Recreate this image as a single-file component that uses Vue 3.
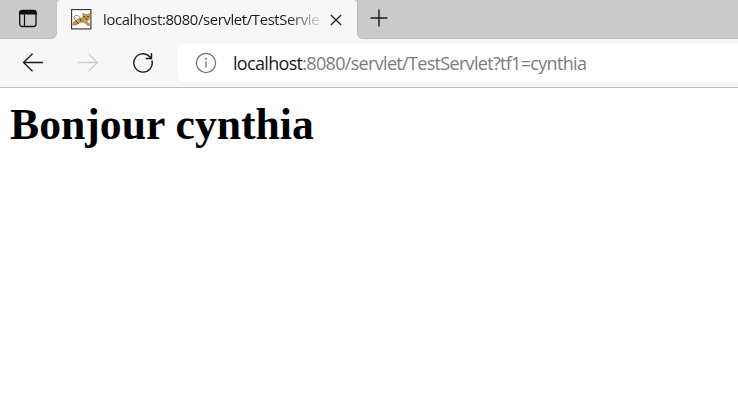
<script setup>
const pageTitle = 'localhost:8080/servlet/TestServlet'
const host = 'localhost'
const path = ':8080/servlet/TestServlet?tf1=cynthia'
const heading = 'Bonjour cynthia'
</script>

<template>
  <div class="browser">
    <div class="tabs">
      <div class="side side-left">
        <svg class="panel-icon" width="20" height="20" viewBox="0 0 20 20">
          <rect x="1.7" y="1.5" width="16.3" height="16" rx="2.5" fill="none" stroke="#111" stroke-width="1.3" />
          <path d="M1 5.500V4Q1 1 4 1H16Q18.7 1 18.7 4V5.500Z" fill="#111" />
          <path d="M6.5 5.500V17.5" stroke="#111" stroke-width="1.2" />
        </svg>
      </div>
      <div class="tab">
        <svg class="favicon" width="21" height="21" viewBox="0 0 21 21">
          <rect x=".6" y=".6" width="19.3" height="19.3" fill="#fff" stroke="#302e2c" stroke-width="1.1" />
          <path d="M5.5 12.5C2 10 2.5 6 6 6.5S8.500 8.500 9 9" fill="none" stroke="#77726a" stroke-width=".8" />
          <path d="M1.500 14L7 10L12 8.500L12 4.200L14 5.500H17L19.500 4V8.500L17.500 11L15.500 12L19.500 16L17 16.500L12.500 13L9 13.500L5 16H1.500L3.500 13.500Z" fill="#c99c4d" stroke="#755a30" stroke-width=".5" />
          <path d="M12.500 7.700H14.300M16.300 7.700H18M14.500 10H16.500" stroke="#3d301f" stroke-width="1" />
          <path d="M5 12L7.500 15M9 9.700L10 12" stroke="#443322" stroke-width="1" />
        </svg>
        <span class="tab-title">{{ pageTitle }}</span>
        <svg class="close" width="12" height="12" viewBox="0 0 12 12">
          <path d="M1 1L11 11M11 1L1 11" stroke="#222" stroke-width="1.3" />
        </svg>
      </div>
      <div class="side side-right">
        <svg class="plus" width="18" height="18" viewBox="0 0 18 18">
          <path d="M9 .5V17.500M.5 9H17.500" stroke="#1b1b1b" stroke-width="1.4" />
        </svg>
      </div>
    </div>
    <div class="toolbar">
      <svg class="nav" width="22" height="20" viewBox="0 0 22 20">
        <path d="M21 9.500H1.500M10.500 .7L1.500 9.500L10.500 18.300" fill="none" stroke="#171717" stroke-width="1.3" />
      </svg>
      <svg class="nav forward" width="22" height="20" viewBox="0 0 22 20">
        <path d="M1 9.500H20.500M11.500 .7L20.500 9.500L11.500 18.300" fill="none" stroke="#d0d0d0" stroke-width="1.3" />
      </svg>
      <svg class="nav reload" width="22" height="22" viewBox="0 0 22 22">
        <path d="M19.900 8.500A9.200 9.200 0 1 1 17.600 4.500L19.500 6.500M19.500 1V6.500H13.700" fill="none" stroke="#171717" stroke-width="1.4" />
      </svg>
      <div class="address">
        <svg class="info" width="22" height="22" viewBox="0 0 22 22">
          <circle cx="11" cy="11" r="9.600" fill="none" stroke="#707070" stroke-width="1.200" />
          <path d="M11 9.500V15.500" stroke="#707070" stroke-width="1.300" />
          <circle cx="11" cy="6.700" r="1" fill="#707070" />
        </svg>
        <span class="url"><span class="host">{{ host }}</span>{{ path }}</span>
      </div>
    </div>
    <main class="page">
      <h1>{{ heading }}</h1>
    </main>
  </div>
</template>

<style>
body {
  margin: 0;
  background: #fff;
}
</style>

<style scoped>
.browser {
  width: 738px;
  height: 405px;
  overflow: hidden;
  font-family: "Open Sans", "Noto Sans", sans-serif;
}
svg {
  display: block;
  flex: none;
}
.tabs {
  display: flex;
  height: 39px;
  background: linear-gradient(#cbcbcb 50%, #f7f7f7 50%);
}
.side {
  box-sizing: border-box;
  background: #cbcbcb;
  border-bottom: 1px solid #bcbcbc;
}
.side-left {
  width: 57px;
  padding: 9px 0 0 18px;
  border-right: 1px solid #c2c2c2;
  border-bottom-right-radius: 6px;
}
.side-right {
  flex: 1;
  padding: 9px 0 0 12px;
  border-left: 1px solid #bababa;
  border-bottom-left-radius: 6px;
}
.tab {
  box-sizing: border-box;
  display: flex;
  align-items: center;
  width: 300px;
  padding-left: 14px;
  background: #f7f7f7;
  border-radius: 4px 4px 0 0;
}
.tab-title {
  width: 216px;
  margin-left: 11px;
  padding-bottom: 2px;
  overflow: hidden;
  white-space: nowrap;
  font-size: 14.8px;
  line-height: 22px;
  letter-spacing: -0.34px;
  color: #1b1b1b;
  mask-image: linear-gradient(to right, #000 184px, transparent 222px);
}
.close {
  margin-left: 11px;
}
.toolbar {
  box-sizing: border-box;
  display: flex;
  align-items: center;
  height: 49px;
  padding-left: 22px;
  background: #f7f7f7;
  border-bottom: 1px solid #bdbdbd;
}
.forward {
  margin-left: 33px;
}
.reload {
  margin-left: 33px;
}
.address {
  display: flex;
  align-items: center;
  flex: 1;
  height: 38px;
  margin-left: 24px;
  padding-left: 17px;
  background: #fff;
  border-radius: 5px 0 0 5px;
}
.url {
  margin-left: 16px;
  padding-bottom: 1px;
  white-space: nowrap;
  font-size: 18px;
  line-height: 26px;
  letter-spacing: -0.68px;
  color: #7c7c7c;
}
.host {
  color: #1b1b1b;
}
.page {
  padding: 11px 10px;
}
h1 {
  margin: 0;
  font: bold 43.7px/50px "Liberation Serif", serif;
  color: #000;
}
</style>
